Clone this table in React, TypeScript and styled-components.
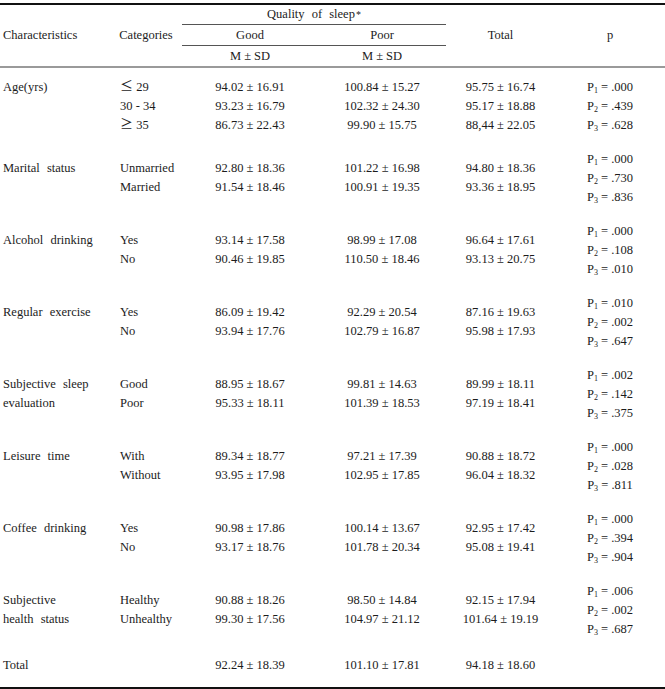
import React from 'react';
import styled, {createGlobalStyle} from "styled-components";

const GlobalStyle = createGlobalStyle`
    body {
        margin: 0;
        background: #fff;
        color: #1c1c1c;
        font-family: "Liberation Serif", "Times New Roman", serif;
        font-size: 12.5px;
    }
`

const COLS = "110px 72px 136px 128px 109px 110px"
const LINE = 19

type Group = {
    label: string[]
    rows: string[][]
    p: string[]
}

const groups: Group[] = [
    {
        label: ["Age(yrs)"],
        rows: [
            ["≤|29", "94.02 ± 16.91", "100.84 ± 15.27", "95.75 ± 16.74"],
            ["30 - 34", "93.23 ± 16.79", "102.32 ± 24.30", "95.17 ± 18.88"],
            ["≥|35", "86.73 ± 22.43", "99.90 ± 15.75", "88,44 ± 22.05"],
        ],
        p: [".000", ".439", ".628"],
    },
    {
        label: ["Marital status"],
        rows: [
            ["Unmarried", "92.80 ± 18.36", "101.22 ± 16.98", "94.80 ± 18.36"],
            ["Married", "91.54 ± 18.46", "100.91 ± 19.35", "93.36 ± 18.95"],
        ],
        p: [".000", ".730", ".836"],
    },
    {
        label: ["Alcohol drinking"],
        rows: [
            ["Yes", "93.14 ± 17.58", "98.99 ± 17.08", "96.64 ± 17.61"],
            ["No", "90.46 ± 19.85", "110.50 ± 18.46", "93.13 ± 20.75"],
        ],
        p: [".000", ".108", ".010"],
    },
    {
        label: ["Regular exercise"],
        rows: [
            ["Yes", "86.09 ± 19.42", "92.29 ± 20.54", "87.16 ± 19.63"],
            ["No", "93.94 ± 17.76", "102.79 ± 16.87", "95.98 ± 17.93"],
        ],
        p: [".010", ".002", ".647"],
    },
    {
        label: ["Subjective sleep", "evaluation"],
        rows: [
            ["Good", "88.95 ± 18.67", "99.81 ± 14.63", "89.99 ± 18.11"],
            ["Poor", "95.33 ± 18.11", "101.39 ± 18.53", "97.19 ± 18.41"],
        ],
        p: [".002", ".142", ".375"],
    },
    {
        label: ["Leisure time"],
        rows: [
            ["With", "89.34 ± 18.77", "97.21 ± 17.39", "90.88 ± 18.72"],
            ["Without", "93.95 ± 17.98", "102.95 ± 17.85", "96.04 ± 18.32"],
        ],
        p: [".000", ".028", ".811"],
    },
    {
        label: ["Coffee drinking"],
        rows: [
            ["Yes", "90.98 ± 17.86", "100.14 ± 13.67", "92.95 ± 17.42"],
            ["No", "93.17 ± 18.76", "101.78 ± 20.34", "95.08 ± 19.41"],
        ],
        p: [".000", ".394", ".904"],
    },
    {
        label: ["Subjective", "health status"],
        rows: [
            ["Healthy", "90.88 ± 18.26", "98.50 ± 14.84", "92.15 ± 17.94"],
            ["Unhealthy", "99.30 ± 17.56", "104.97 ± 21.12", "101.64 ± 19.19"],
        ],
        p: [".006", ".002", ".687"],
    },
]

// "≤|29" -> wide comparison sign followed by the number
const Category = ({text}: { text: string }) => {
    const [sign, rest] = text.split("|")
    if (rest === undefined) return <Line>{text}</Line>
    return <Line><Sym>{sign}</Sym> {rest}</Line>
}

export default function App() {
    return (
        <>
            <GlobalStyle/>
            <Page>
                <Header>
                    <HeadCell $col="1" $row="1 / 4" $align="start">Characteristics</HeadCell>
                    <HeadCell $col="2" $row="1 / 4">Categories</HeadCell>
                    <HeadCell $col="3 / 5" $row="1" $rule $wide>
                        Quality of sleep<Sup>*</Sup>
                    </HeadCell>
                    <HeadCell $col="3" $row="2" $rule>Good</HeadCell>
                    <HeadCell $col="4" $row="2" $rule>Poor</HeadCell>
                    <HeadCell $col="3" $row="3">M ± SD</HeadCell>
                    <HeadCell $col="4" $row="3">M ± SD</HeadCell>
                    <HeadCell $col="5" $row="1 / 4">Total</HeadCell>
                    <HeadCell $col="6" $row="1 / 4">p</HeadCell>
                </Header>
                <Body>
                    {groups.map((g, i) => (
                        <GroupRow key={i}>
                            <Main>
                                <Stack $align="start" $pad={3}>
                                    {g.label.map((l, j) => <Label key={j}>{l}</Label>)}
                                </Stack>
                                <Stack $align="start" $pad={10}>
                                    {g.rows.map((r, j) => <Category key={j} text={r[0]}/>)}
                                </Stack>
                                {[1, 2, 3].map(c => (
                                    <Stack key={c}>
                                        {g.rows.map((r, j) => <Line key={j}>{r[c]}</Line>)}
                                    </Stack>
                                ))}
                            </Main>
                            <Stack>
                                {g.p.map((v, j) => (
                                    <Line key={j}>P<Sub>{j + 1}</Sub> = {v}</Line>
                                ))}
                            </Stack>
                        </GroupRow>
                    ))}
                    <TotalRow>
                        <Stack $align="start" $pad={3}><Line>Total</Line></Stack>
                        <Stack/>
                        <Stack><Line>92.24 ± 18.39</Line></Stack>
                        <Stack><Line>101.10 ± 17.81</Line></Stack>
                        <Stack><Line>94.18 ± 18.60</Line></Stack>
                        <Stack/>
                    </TotalRow>
                </Body>
            </Page>
        </>
    );
}

const Page = styled.div`
    width: 665px;
    padding-top: 3px;
`

const Header = styled.div`
    display: grid;
    grid-template-columns: ${COLS};
    grid-template-rows: 20px 21px 20px;
    border-top: 2px solid #111;
    border-bottom: 2px solid #9a9a9a;
`

const HeadCell = styled.div<{ $col: string; $row: string; $align?: string; $rule?: boolean; $wide?: boolean }>`
    grid-column: ${p => p.$col};
    grid-row: ${p => p.$row};
    display: flex;
    align-items: center;
    justify-content: ${p => p.$align === "start" ? "flex-start" : "center"};
    padding-left: ${p => p.$align === "start" ? "3px" : "0"};
    box-sizing: border-box;
    border-bottom: ${p => p.$rule ? "1px solid #555" : "none"};
    word-spacing: ${p => p.$wide ? "4px" : "0"};
    white-space: nowrap;
`

const Sup = styled.sup`
    font-size: 10px;
    vertical-align: 4px;
    line-height: 0;
    margin-left: 1px;
`

const Sub = styled.sub`
    font-size: 8px;
    vertical-align: -2px;
    line-height: 0;
`

const Sym = styled.span`
    font-family: "Noto Sans CJK KR", "DejaVu Sans", sans-serif;
    font-size: 13px;
    line-height: 0;
    vertical-align: 1px;
`

const Body = styled.div`
    padding-top: 2px;
    border-bottom: 2px solid #111;
`

const GroupRow = styled.div`
    display: grid;
    grid-template-columns: 555px 110px;
    align-items: center;
    padding: 7.5px 0;
`

const Main = styled.div`
    display: grid;
    grid-template-columns: 110px 72px 136px 128px 109px;
    align-items: start;
`

const TotalRow = styled.div`
    display: grid;
    grid-template-columns: ${COLS};
    padding: 9.5px 0 12.5px;
`

const Stack = styled.div<{ $align?: string; $pad?: number }>`
    display: flex;
    flex-direction: column;
    align-items: ${p => p.$align === "start" ? "flex-start" : "center"};
    padding-left: ${p => p.$pad ?? 0}px;
`

const Line = styled.div`
    height: ${LINE}px;
    line-height: ${LINE}px;
    white-space: nowrap;
`

const Label = styled(Line)`
    word-spacing: 4px;
`
